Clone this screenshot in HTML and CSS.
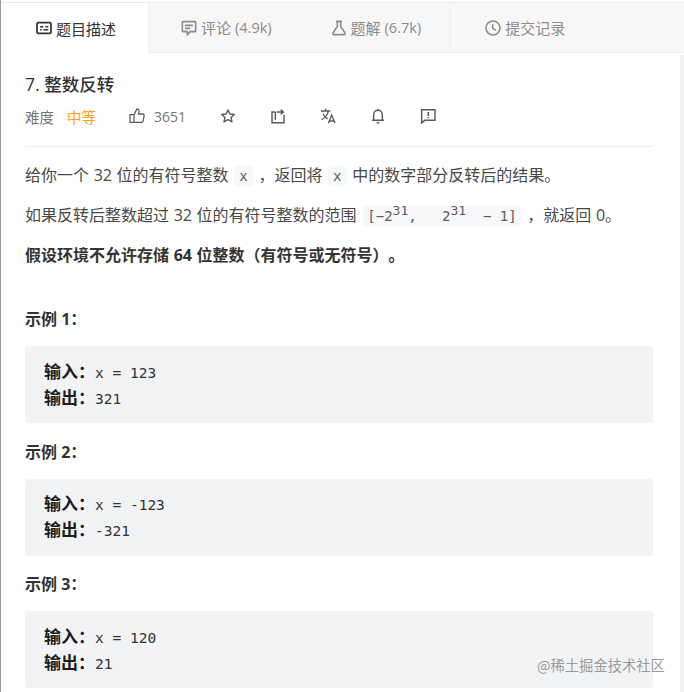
FILE: index.html
```html
<!DOCTYPE html>
<html lang="zh-CN">
  <head>
    <meta charset="UTF-8" />
    <title>7. 整数反转</title>
    <link rel="stylesheet" href="styles.css">
  </head>
  <body>
    <div class="page">
      <nav class="tabs">
        <a class="tab active">
          <svg class="tab-icon" viewBox="0 0 24 24"><rect x="1.500" y="4" width="21" height="16" rx="2" fill="none" stroke="currentColor" stroke-width="2.600"/><path d="M6 10h5M14 10h4.500M6 14.500h2.500M11 14.500h7.500" stroke="currentColor" stroke-width="2.200" fill="none"/></svg>
          题目描述
        </a>
        <a class="tab second">
          <svg class="tab-icon" viewBox="0 0 24 24"><path d="M3 2.500h18a1 1 0 0 1 1 1v13a1 1 0 0 1-1 1h-7l-4.500 4.500v-4.500H3a1 1 0 0 1-1-1v-13a1 1 0 0 1 1-1z" fill="none" stroke="currentColor" stroke-width="2.400"/><path d="M6 8h12M6 12.500h8" stroke="currentColor" stroke-width="2.400" fill="none"/></svg>
          评论 <span class="count">(4.9k)</span>
        </a>
        <a class="tab">
          <svg class="tab-icon" viewBox="0 0 24 24"><path d="M7.500 2h9M9.500 2v7.500L3 19.500A1.600 1.600 0 0 0 4.500 22h15a1.600 1.600 0 0 0 1.500-2.500L14.500 9.500V2" fill="none" stroke="currentColor" stroke-width="2.400"/></svg>
          题解 <span class="count">(6.7k)</span>
        </a>
        <a class="tab last">
          <svg class="tab-icon" viewBox="0 0 24 24"><circle cx="12" cy="12" r="10.500" fill="none" stroke="currentColor" stroke-width="2.400"/><path d="M11.500 6v6.500l5 3" fill="none" stroke="currentColor" stroke-width="2.400"/></svg>
          提交记录
        </a>
      </nav>

      <main class="content">
        <h1 class="title">7. 整数反转</h1>
        <div class="meta">
          <span class="meta-label">难度</span>
          <span class="level">中等</span>
          <span class="likes">
            <svg class="meta-icon" viewBox="0 0 24 24"><path d="M7.500 10v11.500H1.500V10zM7.500 10l4.500-8.500c2.500 0 3.500 1.700 3 4L14.200 9h6.300a2.200 2.200 0 0 1 2.200 2.600l-1.600 8A2.300 2.300 0 0 1 18.500 21.500H7.500" fill="none" stroke="currentColor" stroke-width="1.900"/></svg>
            3651
          </span>
          <svg class="meta-icon" viewBox="0 0 24 24"><path d="M12 3l2.800 6 6.700.8-4.900 4.500 1.300 6.500L12 17.500l-5.900 3.300 1.300-6.500-4.900-4.500 6.700-.8z" fill="none" stroke="currentColor" stroke-width="2.200" stroke-linejoin="round"/></svg>
          <svg class="meta-icon" viewBox="0 0 24 24"><path d="M8 6H3v16h18V10M8 6v12M10 6h9M16 2.500L20 6l-4 3.500" fill="none" stroke="currentColor" stroke-width="2.200"/></svg>
          <svg class="meta-icon" viewBox="0 0 24 24"><path d="M1.500 4.500h14M8.500 1v3.500M12.500 4.500c-1 5.500-4.500 10-10 13M4.500 8.500c1.500 3.500 3.800 6 7 8M12.500 23l5-12.500 5 12.500M14.200 19.500h6.600" fill="none" stroke="currentColor" stroke-width="2"/></svg>
          <svg class="meta-icon" viewBox="0 0 24 24"><path d="M5.500 18.500V10a6.500 6.500 0 0 1 13 0v8.500M3 18.500h18M10 22h4M12 1.500v2" fill="none" stroke="currentColor" stroke-width="2.200"/></svg>
          <svg class="meta-icon" viewBox="0 0 24 24"><path d="M2.500 2.500h20v16H7l-4.500 4z" fill="none" stroke="currentColor" stroke-width="2.200"/><path d="M12.500 6v6M12.500 13.500v2" stroke="currentColor" stroke-width="2.400" fill="none"/></svg>
        </div>

        <div class="desc">
          <p>给你一个 32 位的有符号整数 <code>x</code> ，返回将 <code>x</code> 中的数字部分反转后的结果。</p>
          <p>如果反转后整数超过 32 位的有符号整数的范围 <code>[−2<sup>31</sup>,   2<sup>31</sup>  − 1]</code> ，就返回 0。</p>
          <p><strong>假设环境不允许存储 64 位整数（有符号或无符号）。</strong></p>
        </div>

        <h2 class="example first">示例 1：</h2>
        <pre class="sample"><b>输入：</b>x = 123
<b>输出：</b>321</pre>

        <h2 class="example">示例 2：</h2>
        <pre class="sample"><b>输入：</b>x = -123
<b>输出：</b>-321</pre>

        <h2 class="example">示例 3：</h2>
        <pre class="sample"><b>输入：</b>x = 120
<b>输出：</b>21</pre>
      </main>

      <div class="scrollbar"></div>
      <div class="watermark">@稀土掘金技术社区</div>
    </div>
  </body>
</html>
```

FILE: styles.css
```css
* {
  margin: 0;
  box-sizing: border-box;
}

html,
body {
  height: 692px;
  overflow: hidden;
  background-color: white;
}

body {
  font-family: "Open Sans", "Noto Sans CJK SC", sans-serif;
  color: #484848;
  text-spacing-trim: space-all;
}

.page {
  position: relative;
  height: 692px;
  overflow: hidden;
  border-left: 1px solid #9a9a9a;
  padding-top: 2px;
}

.tabs {
  display: flex;
  height: 51px;
  border-top: 1px solid #ececec;
  background-color: #f7f7f7;
  border-bottom: 1px solid #eeeeee;
  font-size: 15px;
  color: #8c8c8c;
}

.tab {
  display: flex;
  align-items: center;
  gap: 4px;
  padding: 0 29px 0 30px;
  white-space: nowrap;
}

.tab.active {
  width: 148px;
  padding: 0 0 0 35px;
  margin-bottom: -1px;
  background-color: white;
  color: #333333;
  border-right: 1px solid #f0f0f0;
}

.tab.second {
  margin-left: 2px;
}

.tab.last {
  padding-left: 34px;
  border-left: 1px solid #f0f0f0;
}

.count {
  font-size: 14.500px;
}

.tab-icon {
  width: 16px;
  height: 16px;
  flex-shrink: 0;
}

.content {
  padding: 0 31px 0 24px;
}

.title {
  margin-top: 19px;
  font-size: 17.500px;
  font-weight: 500;
  line-height: 24px;
  color: #333333;
}

.meta {
  display: flex;
  align-items: center;
  height: 24px;
  margin-top: 8px;
  font-size: 14.500px;
  color: #757575;
}

.level {
  margin-left: 13px;
  color: #ffa116;
}

.likes {
  display: flex;
  align-items: center;
  gap: 9px;
  margin-left: 33px;
  font-size: 14px;
}

.meta-icon {
  width: 16px;
  height: 16px;
  margin-left: 34px;
  color: #5c5c5c;
}

.likes .meta-icon {
  margin-left: 0;
}

.desc {
  margin-top: 18px;
  padding-top: 16px;
  border-top: 1px solid #eeeeee;
  font-size: 16px;
  line-height: 24px;
  word-spacing: 0.500px;
}

.desc p {
  margin-bottom: 16px;
}

.desc strong {
  color: #333333;
}

code {
  margin: 0 1px;
  padding: 2px 5px;
  border-radius: 3px;
  background-color: #f7f8fa;
  font-family: "DejaVu Sans Mono", monospace;
  font-size: 14px;
  line-height: 1;
  color: #5c5c5c;
  white-space: pre;
  word-spacing: 0;
}

sup {
  font-size: 13px;
  line-height: 0;
}

.example {
  margin-top: 16.500px;
  font-size: 16px;
  font-weight: 700;
  line-height: 24px;
  color: #333333;
}

.example.first {
  margin-top: 40px;
}

.sample {
  margin-top: 15px;
  height: 77px;
  padding: 13.500px 19px;
  border-radius: 3px;
  background-color: #f2f3f5;
  font-family: "DejaVu Sans Mono", monospace;
  font-size: 14.500px;
  line-height: 26px;
  color: #333333;
}

.sample b {
  font-family: "Noto Sans CJK SC", sans-serif;
  font-size: 17px;
  line-height: 1;
  color: #1c1c1c;
}

.scrollbar {
  position: absolute;
  top: 55px;
  right: 0;
  bottom: 0;
  width: 4px;
  background-color: #f0f0f0;
}

.watermark {
  position: absolute;
  top: 655px;
  left: 536px;
  font-family: "Noto Sans CJK SC", sans-serif;
  font-size: 14.300px;
  line-height: 20px;
  color: #9a9a9a;
  white-space: nowrap;
}
```
